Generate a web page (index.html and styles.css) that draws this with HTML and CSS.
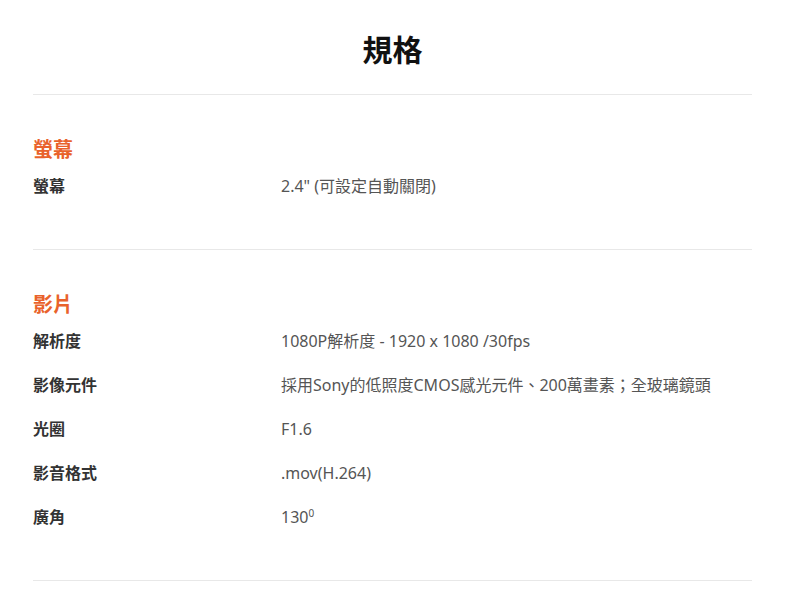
FILE: index.html
```html
<!DOCTYPE html>
<html lang="zh-Hant">
<head>
    <meta charset="UTF-8">
    <meta name="viewport" content="width=device-width, initial-scale=1.0">
    <title>規格</title>
    <link rel="stylesheet" href="styles.css">
</head>
<body>
    <div class="specs">
        <h1 class="specs-title">規格</h1>

        <!-- 螢幕 -->
        <div class="spec-group">
            <h3 class="group-title">螢幕</h3>
            <div class="spec-row">
                <div class="spec-label">螢幕</div>
                <div class="spec-value">2.4" (可設定自動關閉)</div>
            </div>
        </div>

        <!-- 影片 -->
        <div class="spec-group">
            <h3 class="group-title">影片</h3>
            <div class="spec-row">
                <div class="spec-label">解析度</div>
                <div class="spec-value">1080P解析度 - 1920 x 1080 /30fps</div>
            </div>
            <div class="spec-row">
                <div class="spec-label">影像元件</div>
                <div class="spec-value">採用Sony的低照度CMOS感光元件、200萬畫素；全玻璃鏡頭</div>
            </div>
            <div class="spec-row">
                <div class="spec-label">光圈</div>
                <div class="spec-value">F1.6</div>
            </div>
            <div class="spec-row">
                <div class="spec-label">影音格式</div>
                <div class="spec-value">.mov(H.264)</div>
            </div>
            <div class="spec-row">
                <div class="spec-label">廣角</div>
                <div class="spec-value">130<sup>0</sup></div>
            </div>
        </div>
    </div>
</body>
</html>
```

FILE: styles.css
```css
body {
    font-family: "Noto Sans", "Noto Sans CJK TC", sans-serif;
    background-color: #fff;
    color: #333;
    margin: 0;
    padding: 0;
}

.specs {
    width: 719px;
    margin-left: 33px;
    padding-top: 30px;
}

.specs-title {
    margin: 0;
    font-size: 30px;
    line-height: 40px;
    font-weight: 700;
    color: #111;
    text-align: center;
    padding-bottom: 24px;
    border-bottom: 1px solid #e8e8e8;
}

.spec-group {
    padding: 41px 0 30px;
    border-bottom: 1px solid #e8e8e8;
}

.group-title {
    margin: 0 0 11px;
    font-size: 20px;
    line-height: 28px;
    font-weight: 700;
    color: #e9622b;
}

.spec-row {
    display: grid;
    grid-template-columns: 248px 1fr;
    padding-bottom: 22px;
    font-size: 16px;
    line-height: 22px;
}

.spec-label {
    font-weight: 700;
    color: #333;
}

.spec-value {
    color: #555;
}

.spec-value sup {
    font-size: 10px;
    line-height: 0;
}
```
